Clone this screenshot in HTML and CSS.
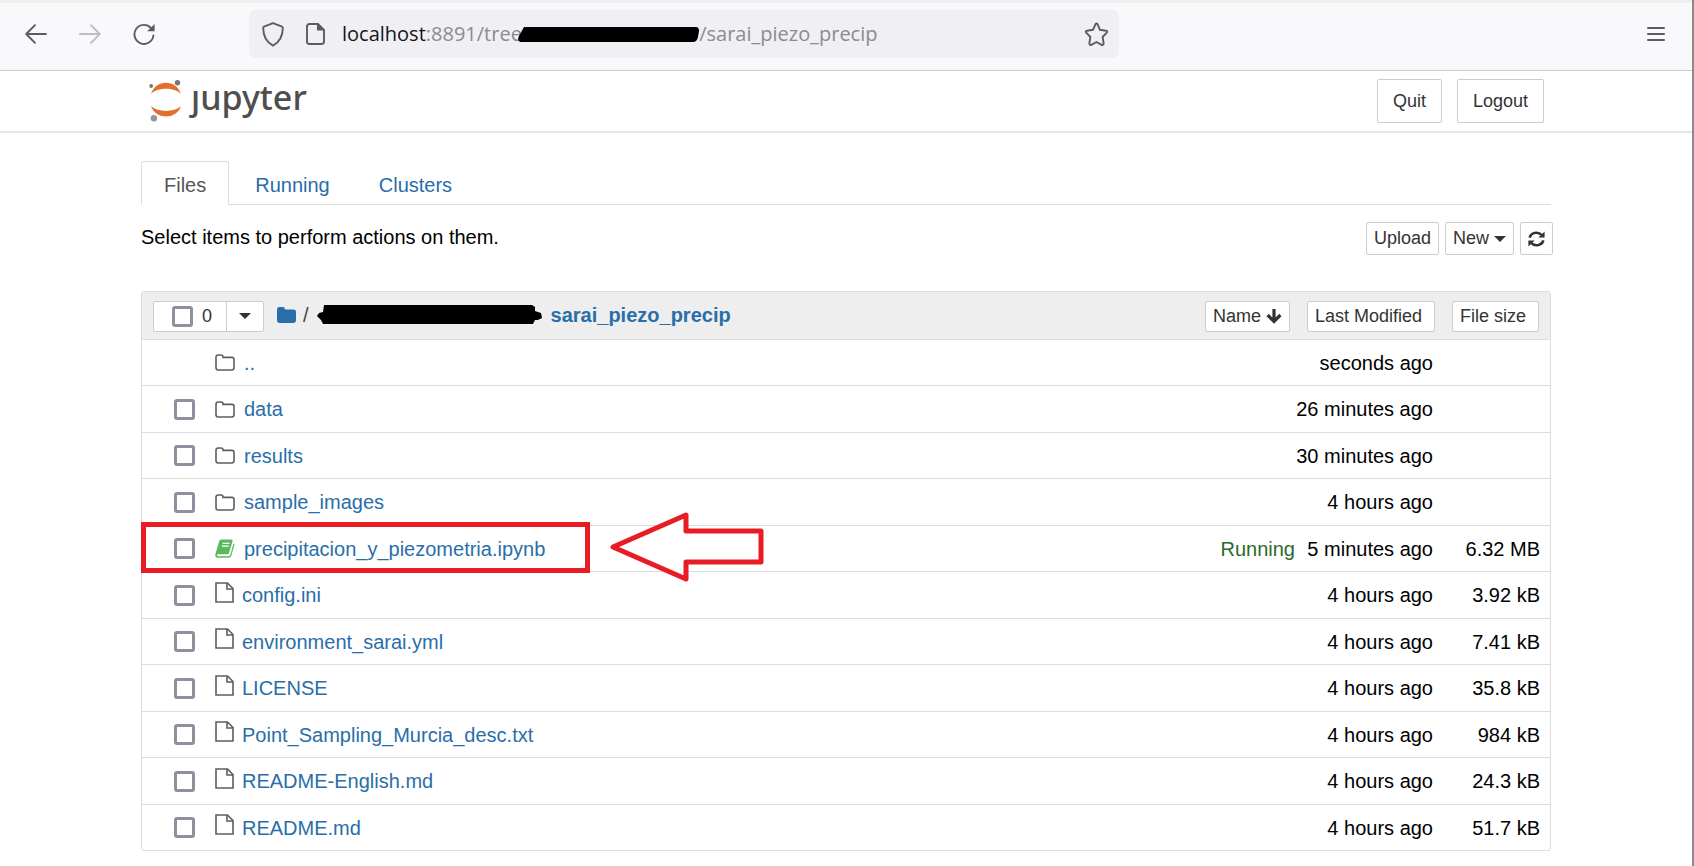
FILE: index.html
```html
<!DOCTYPE html>
<html lang="en">
<head>
<meta charset="utf-8">
<title>sarai_piezo_precip</title>
<link rel="stylesheet" href="styles.css">
</head>
<body>
<svg class="sprite" aria-hidden="true">
  <symbol id="folder-open" viewBox="0 0 20 17"><path d="M1 3.2Q1 1 3.2 1H6Q8 1 8 3V3.4H16.8Q19 3.4 19 5.6V13.8Q19 16 16.8 16H3.2Q1 16 1 13.8Z" fill="none" stroke="#5e5e5e" stroke-width="1.6"/></symbol>
  <symbol id="file" viewBox="0 0 19 21"><path d="M1 1H12.5L18 6.5V20H1ZM12 1V7H18" fill="none" stroke="#5e5e5e" stroke-width="1.6"/></symbol>
  <symbol id="caret" viewBox="0 0 12 6"><path d="M0 0H12L6 6Z" fill="#333"/></symbol>
</svg>

<header class="chrome">
  <nav class="chrome-nav">
    <button class="icon-btn" aria-label="Back"><svg width="22" height="20" viewBox="0 0 22 20"><path d="M21 10H1.5M10 1.2L1.2 10L10 18.8" fill="none" stroke="#5b5b66" stroke-width="1.9" stroke-linecap="round" stroke-linejoin="round"/></svg></button>
    <button class="icon-btn" aria-label="Forward" disabled><svg width="22" height="20" viewBox="0 0 22 20"><path d="M1 10H20.5M12 1.2L20.8 10L12 18.8" fill="none" stroke="#bdbdc2" stroke-width="1.9" stroke-linecap="round" stroke-linejoin="round"/></svg></button>
    <button class="icon-btn" aria-label="Reload"><svg width="22" height="22" viewBox="0 0 22 22"><path d="M18 5A9.5 9.5 0 1 0 20.4 12.5" fill="none" stroke="#5b5b66" stroke-width="1.9" stroke-linecap="round"/><path d="M21.6 1V8.2H14.2Z" fill="#5b5b66"/></svg></button>
  </nav>
  <div class="urlbar">
    <svg width="22" height="25" viewBox="0 0 22 25"><path d="M11 1.2L20 4.6Q20.8 5 20.8 6C20.8 13 18.6 19.5 11 23.6C3.4 19.5 1.2 13 1.2 6Q1.2 5 2 4.6Z" fill="none" stroke="#5b5b66" stroke-width="1.9" stroke-linejoin="round"/></svg>
    <svg width="19" height="22" viewBox="0 0 19 22"><path d="M3.5 1H12L18 7V18.5Q18 21 15.5 21H3.5Q1 21 1 18.5V3.5Q1 1 3.5 1Z" fill="none" stroke="#5b5b66" stroke-width="1.9"/><path d="M11 1V7.6H18.2L12 1Z" fill="#5b5b66"/></svg>
    <div class="url" role="textbox" aria-label="Address" tabindex="0"><span class="host">localhost</span>:8891/tree/<svg class="url-mask" width="181" height="15" viewBox="0 0 181 15"><path d="M6 0H178Q181 0 181 4L180 10Q179 15 175 15H2Q-1 13 1 9Z"/></svg>/sarai_piezo_precip</div>
    <button class="icon-btn" aria-label="Bookmark"><svg width="25" height="25" viewBox="0 0 25 25"><path d="M12.5 1.5Q13.2 1.5 13.6 2.4L16 7.8L22 8.7Q24 9.2 22.8 10.6L18.6 15L19.6 21.2Q19.6 23.6 17.7 22.9L12.5 20L7.3 22.9Q5.4 23.6 5.4 21.2L6.4 15L2.2 10.6Q1 9.2 3 8.7L9 7.8L11.4 2.4Q11.8 1.5 12.5 1.5Z" fill="none" stroke="#5b5b66" stroke-width="1.9" stroke-linejoin="round"/></svg></button>
  </div>
  <button class="icon-btn menu" aria-label="Menu"><svg width="18" height="16" viewBox="0 0 18 16"><path d="M1 2H17M1 8H17M1 14H17" stroke="#5b5b66" stroke-width="2" stroke-linecap="round"/></svg></button>
</header>

<div class="site-header">
  <div class="container site-bar">
    <a class="logo" href="#" aria-label="jupyter">
      <svg width="34" height="44" viewBox="0 0 34 44">
        <path d="M2 14.7C7 0 27 0 32 14.7C25 8 9 8 2 14.7Z" fill="#e46e2e"/>
        <path d="M2 27.3C7 41 27 41 32 27.3C25 33.4 9 33.4 2 27.3Z" fill="#e46e2e"/>
        <circle cx="2.2" cy="7" r="1.9" fill="#767677"/><circle cx="28.5" cy="3.7" r="2.7" fill="#767677"/><circle cx="4.9" cy="39.3" r="3.2" fill="#949494"/>
      </svg>
      <span class="wordmark">ȷupyter</span>
    </a>
    <div class="account"><button class="btn btn-large">Quit</button><button class="btn btn-large">Logout</button></div>
  </div>
</div>

<main class="container">
  <nav class="tabs"><a class="tab active" href="#">Files</a><a class="tab" href="#">Running</a><a class="tab" href="#">Clusters</a></nav>
  <div class="toolbar">
    <p class="hint">Select items to perform actions on them.</p>
    <div class="actions">
      <button class="btn">Upload</button>
      <button class="btn">New <svg width="12" height="6"><use href="#caret"/></svg></button>
      <button class="btn" aria-label="Refresh"><svg width="17" height="16" viewBox="0 0 17 16"><path d="M1.6 6.6A7 6.4 0 0 1 13.6 3.8M15.4 9.4A7 6.4 0 0 1 3.4 12.2" fill="none" stroke="#333" stroke-width="2.5"/><path d="M16.6 0.6V6.6H10.4ZM0.4 15.4V9.4H6.6Z" fill="#333"/></svg></button>
    </div>
  </div>

  <table class="files">
    <colgroup><col><col class="col-modified"><col class="col-size"></colgroup>
    <thead>
      <tr>
        <th>
          <div class="list-head">
            <div class="selector">
              <label class="select-all"><input class="check" type="checkbox"><span>0</span></label>
              <button class="select-menu" aria-label="Select by type"><svg width="12" height="6"><use href="#caret"/></svg></button>
            </div>
            <div class="crumbs">
              <a href="#" aria-label="Home"><svg width="19" height="16" viewBox="0 0 19 16"><path d="M0 2.4Q0 0 2.4 0H5.6Q8 0 8 2.4H16.6Q19 2.4 19 4.8V13.6Q19 16 16.6 16H2.4Q0 16 0 13.6Z" fill="#296eaa"/></svg></a>
              <span>/</span>
              <svg class="crumb-mask" width="225" height="20" viewBox="0 0 225 20"><path d="M7 0H215L218 2V6L224 8L225 13L221 15H218L216 19H6L4 15L0 11L2 8L6 7Z"/></svg>
              <a class="current" href="#">sarai_piezo_precip</a>
            </div>
            <button class="btn btn-sort">Name <svg width="16" height="15" viewBox="0 0 16 15"><path d="M8 0V12M1.6 6L8 12.4L14.4 6" fill="none" stroke="#333" stroke-width="3.2"/></svg></button>
          </div>
        </th>
        <th class="head-modified"><button class="btn btn-sort">Last Modified</button></th>
        <th class="head-size"><button class="btn btn-sort">File size</button></th>
      </tr>
    </thead>
    <tbody>
      <tr><td><div class="item"><span class="check-space"></span><svg class="folder"><use href="#folder-open"/></svg><a href="#">..</a></div></td><td>seconds ago</td><td></td></tr>
      <tr><td><div class="item"><input class="check" type="checkbox" aria-label="data"><svg class="folder"><use href="#folder-open"/></svg><a href="#">data</a></div></td><td>26 minutes ago</td><td></td></tr>
      <tr><td><div class="item"><input class="check" type="checkbox" aria-label="results"><svg class="folder"><use href="#folder-open"/></svg><a href="#">results</a></div></td><td>30 minutes ago</td><td></td></tr>
      <tr><td><div class="item"><input class="check" type="checkbox" aria-label="sample_images"><svg class="folder"><use href="#folder-open"/></svg><a href="#">sample_images</a></div></td><td>4 hours ago</td><td></td></tr>
      <tr><td class="marked"><div class="item"><input class="check" type="checkbox" aria-label="precipitacion_y_piezometria.ipynb"><svg class="folder book" viewBox="0 0 20 19"><path d="M6 0.5H16.5Q18 0.5 17.6 2L14 14Q13.6 15.3 12.2 15.3H3Q1.9 15.3 2 16.3Q2.2 17.2 3.5 17.2H13.6Q14.8 17.2 15.2 16L18.6 4.6Q19.8 5 19.4 6.2L16.2 17Q15.6 18.8 13.8 18.8H3Q0 18.6 0.3 15.4L4.2 2Q4.6 0.5 6 0.5Z" fill="#5cb85c"/><path d="M7.6 4.3H14.6M6.8 7.2H13.8" stroke="#fff" stroke-width="1.2"/></svg><a href="#">precipitacion_y_piezometria.ipynb</a><span class="running">Running</span></div>
        <div class="highlight"></div>
        <svg class="arrow" width="154" height="70" viewBox="0 0 154 70"><path d="M3 35L76 3V19H151V50H76V67Z" fill="#fff" stroke="#e81c24" stroke-width="5" stroke-linejoin="round"/></svg></td><td>5 minutes ago</td><td>6.32 MB</td></tr>
      <tr><td><div class="item"><input class="check" type="checkbox" aria-label="config.ini"><svg class="file"><use href="#file"/></svg><a href="#">config.ini</a></div></td><td>4 hours ago</td><td>3.92 kB</td></tr>
      <tr><td><div class="item"><input class="check" type="checkbox" aria-label="environment_sarai.yml"><svg class="file"><use href="#file"/></svg><a href="#">environment_sarai.yml</a></div></td><td>4 hours ago</td><td>7.41 kB</td></tr>
      <tr><td><div class="item"><input class="check" type="checkbox" aria-label="LICENSE"><svg class="file"><use href="#file"/></svg><a href="#">LICENSE</a></div></td><td>4 hours ago</td><td>35.8 kB</td></tr>
      <tr><td><div class="item"><input class="check" type="checkbox" aria-label="Point_Sampling_Murcia_desc.txt"><svg class="file"><use href="#file"/></svg><a href="#">Point_Sampling_Murcia_desc.txt</a></div></td><td>4 hours ago</td><td>984 kB</td></tr>
      <tr><td><div class="item"><input class="check" type="checkbox" aria-label="README-English.md"><svg class="file"><use href="#file"/></svg><a href="#">README-English.md</a></div></td><td>4 hours ago</td><td>24.3 kB</td></tr>
      <tr><td><div class="item"><input class="check" type="checkbox" aria-label="README.md"><svg class="file"><use href="#file"/></svg><a href="#">README.md</a></div></td><td>4 hours ago</td><td>51.7 kB</td></tr>
    </tbody>
  </table>
</main>
</body>
</html>
```
FILE: styles.css
```css
* { box-sizing: border-box; }

body {
  margin: 0;
  min-height: 100vh;
  border-right: 2px solid #8a8a8a;
  background: #fff;
  color: #000;
  font: 20px/24px "Liberation Sans", Arial, sans-serif;
}

a { color: #296eaa; text-decoration: none; }
button { font-family: inherit; cursor: pointer; }
svg { display: block; flex: none; }
.sprite { display: none; }

.icon-btn { display: flex; padding: 0; border: 0; background: none; }

/* browser toolbar */
.chrome {
  display: flex;
  align-items: center;
  height: 71px;
  padding: 0 27px 5px 25px;
  border-top: 3px solid #efefef;
  border-bottom: 1px solid #ccc;
  background: #f9f9fb;
}
.chrome-nav { display: flex; align-items: center; gap: 32px; width: 224px; }
.urlbar {
  display: flex;
  align-items: center;
  flex: 0 1 870px;
  height: 48px;
  padding: 0 10px 0 13px;
  border-radius: 6px;
  background: #f0f0f4;
}
.urlbar > svg + svg { margin-left: 22px; }
.url {
  display: flex;
  align-items: center;
  flex: 1;
  margin-left: 17px;
  color: #8b8b90;
  font: 20px/28px "Open Sans", "Noto Sans", sans-serif;
  white-space: nowrap;
}
.host { color: #15141a; }
.url-mask { margin-left: -11px; }
.menu { margin-left: auto; }

/* site header */
.container { max-width: 1410px; margin: 0 auto; }
.site-header { border-bottom: 2px solid #e7e7e7; }
.site-bar {
  display: flex;
  align-items: center;
  justify-content: space-between;
  height: 60px;
  padding: 0 7px 0 8px;
}
.logo { display: flex; align-items: center; gap: 8px; }
.wordmark { padding-bottom: 9px; color: #4e4e4e; font: 500 34px/40px "Noto Sans", "Open Sans", sans-serif; }
.account { display: flex; gap: 15px; }

.btn {
  display: flex;
  align-items: center;
  gap: 5px;
  height: 33px;
  padding: 0 7px;
  border: 1px solid #ccc;
  border-radius: 2px;
  background: #fff;
  color: #333;
  font-size: 18px;
  white-space: nowrap;
}
.btn-large { height: 44px; padding: 0 15px; }
.btn-sort { height: 31px; }

/* tabs and actions */
.tabs { display: flex; gap: 3px; margin-top: 28px; border-bottom: 1px solid #ddd; }
.tab {
  height: 44px;
  margin-bottom: -1px;
  padding: 11px 22px 0;
  border: 1px solid transparent;
  border-radius: 3px 3px 0 0;
}
.tab.active { border-color: #ddd #ddd #fff; background: #fff; color: #555; }
.toolbar { display: flex; justify-content: space-between; margin: 17px -2px 36px 0; }
.hint { margin: 0; line-height: 30px; }
.actions { display: flex; gap: 6px; }

/* file list */
.files {
  width: 100%;
  table-layout: fixed;
  border: 1px solid #ddd;
  border-radius: 3px;
  border-spacing: 0;
}
.col-modified { width: 148px; }
.col-size { width: 107px; }
th { height: 48px; padding: 0; border-bottom: 1px solid #ddd; background: #eee; font-weight: normal; }
td { height: 46px; padding: 0 10px 0 0; border-bottom: 1px solid #ddd; text-align: right; white-space: nowrap; }
td:first-child { padding: 0; }
tr:nth-child(even) td { height: 47px; }
tr:last-child td { height: 45px; border-bottom: 0; }

.list-head { display: flex; align-items: center; padding: 0 5px 0 11px; }
.head-modified { padding-left: 12px; }
.head-size { padding-left: 9px; }
.head-modified .btn { width: 128px; }
.head-size .btn { width: 87px; }
.list-head .btn { margin-left: auto; }
.selector { display: flex; height: 31px; border: 1px solid #ccc; border-radius: 2px; background: #fff; color: #333; font-size: 18px; }
.select-all { display: flex; align-items: center; gap: 9px; width: 73px; padding-left: 18px; border-right: 1px solid #ccc; }
.select-menu { display: flex; align-items: center; justify-content: center; width: 36px; padding: 0; border: 0; background: none; }
.crumbs { display: flex; align-items: center; margin-left: 13px; padding-bottom: 3px; color: #444; }
.crumbs span { margin-left: 7px; }
.crumb-mask { margin: 0 9px 0 8px; }
.current { font-weight: bold; }
thead tr th { padding-top: 1px; }

.check {
  flex: none;
  width: 21px;
  height: 21px;
  margin: 0;
  appearance: none;
  border: 3px solid #8f8f9d;
  border-radius: 3px;
  background: #fff;
}
.item { display: flex; align-items: center; padding-left: 32px; }
.check-space { width: 21px; }
.folder { width: 20px; height: 17px; margin: 0 9px 0 20px; }
.book { height: 19px; }
.file { width: 19px; height: 21px; margin: 0 8px 6px 20px; }
.running { margin-left: auto; color: #2b6a2d; }

/* annotation drawn over the list */
.marked { position: relative; }
.highlight {
  position: absolute;
  inset: -4px auto -2px -1px;
  width: 449px;
  border: 5px solid #e81c24;
  pointer-events: none;
}
.arrow { position: absolute; top: -14px; left: 468px; }
```
